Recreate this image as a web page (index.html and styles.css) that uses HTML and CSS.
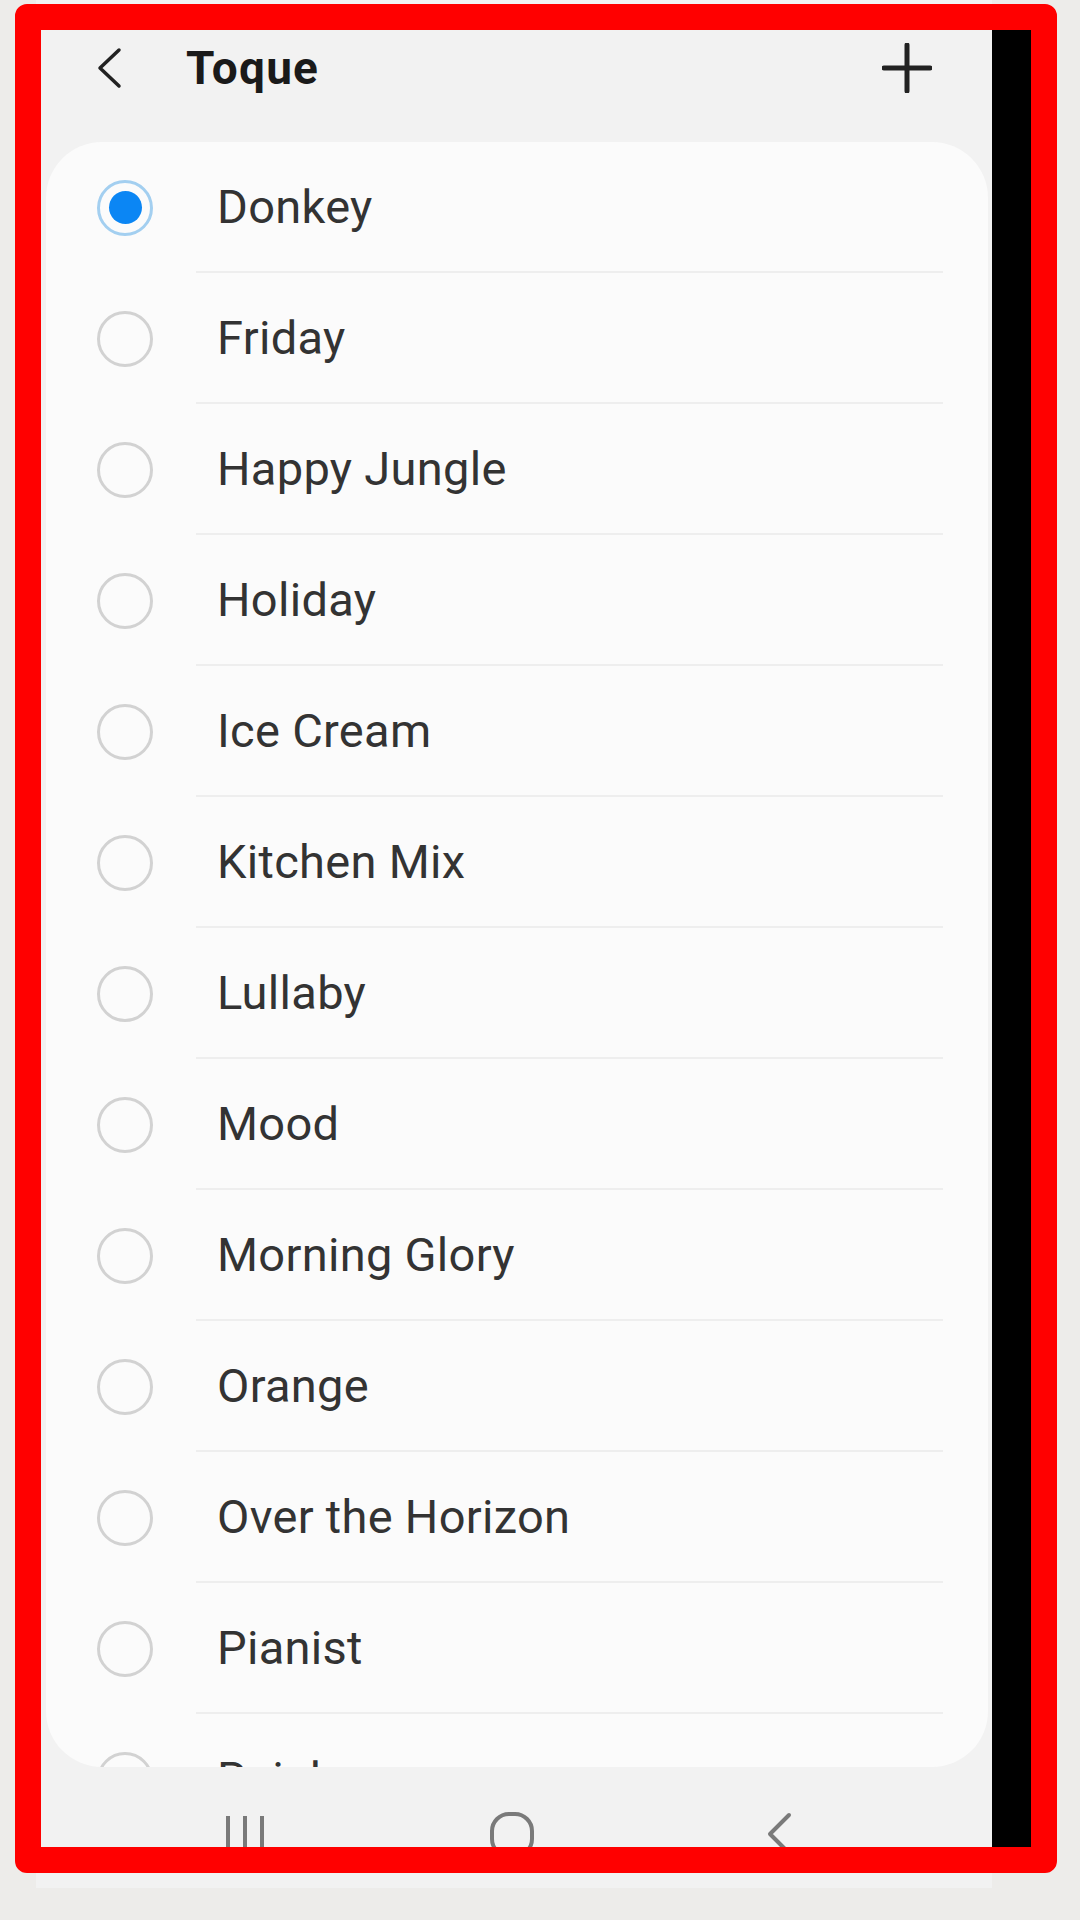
FILE: index.html
```html
<!DOCTYPE html>
<html lang="en">
<head>
<meta charset="utf-8">
<title>Toque</title>
<link rel="stylesheet" href="styles.css">
</head>
<body>
<div class="frame">
  <div class="screen">
    <header class="appbar">
      <svg class="back" width="28" height="42" viewBox="0 0 28 42"><polyline points="24,3 5,21 24,39" fill="none" stroke="#222" stroke-width="3.5" stroke-linecap="round" stroke-linejoin="round"/></svg>
      <h1 class="title">Toque</h1>
      <svg class="add" width="50" height="50" viewBox="0 0 50 50"><path d="M25 2V48M2 25H48" fill="none" stroke="#222" stroke-width="5" stroke-linecap="round"/></svg>
    </header>
    <ul class="list">
      <li class="item selected"><span class="radio"></span><span class="label">Donkey</span></li>
      <li class="item"><span class="radio"></span><span class="label">Friday</span></li>
      <li class="item"><span class="radio"></span><span class="label">Happy Jungle</span></li>
      <li class="item"><span class="radio"></span><span class="label">Holiday</span></li>
      <li class="item"><span class="radio"></span><span class="label">Ice Cream</span></li>
      <li class="item"><span class="radio"></span><span class="label">Kitchen Mix</span></li>
      <li class="item"><span class="radio"></span><span class="label">Lullaby</span></li>
      <li class="item"><span class="radio"></span><span class="label">Mood</span></li>
      <li class="item"><span class="radio"></span><span class="label">Morning Glory</span></li>
      <li class="item"><span class="radio"></span><span class="label">Orange</span></li>
      <li class="item"><span class="radio"></span><span class="label">Over the Horizon</span></li>
      <li class="item"><span class="radio"></span><span class="label">Pianist</span></li>
      <li class="item"><span class="radio"></span><span class="label">Rainbow</span></li>
    </ul>
    <nav class="navbar">
      <span class="navbtn"><svg width="40" height="44" viewBox="0 0 40 44"><path d="M3 4V44M20 4V44M37 4V44" stroke="#7a7a7a" stroke-width="4" fill="none"/></svg></span>
      <span class="navbtn"><svg width="46" height="46" viewBox="0 0 46 46"><rect x="3" y="2" width="40" height="42" rx="17" fill="none" stroke="#7a7a7a" stroke-width="4"/></svg></span>
      <span class="navbtn"><svg width="26" height="44" viewBox="0 0 26 44"><polyline points="23,3 4,22 23,41" fill="none" stroke="#7a7a7a" stroke-width="4" stroke-linecap="round" stroke-linejoin="round"/></svg></span>
    </nav>
  </div>
  <div class="strip"></div>
  <div class="annotation"></div>
</div>
</body>
</html>
```

FILE: styles.css
```css
html, body {
  margin: 0;
  padding: 0;
  background: #edecea;
  width: 1080px;
  height: 1920px;
  overflow: hidden;
  font-family: Roboto, "Noto Sans", "Liberation Sans", sans-serif;
}

.frame {
  position: relative;
  display: flex;
  align-items: flex-start;
  height: 1920px;
}

.screen {
  margin-left: 36px;
  width: 956px;
  height: 1888px;
  background: #f2f2f2;
  display: flex;
  flex-direction: column;
}

.strip {
  width: 40px;
  margin-top: 4px;
  height: 1869px;
  background: #000;
}

.annotation {
  position: absolute;
  left: 15px;
  top: 4px;
  width: 1042px;
  height: 1869px;
  box-sizing: border-box;
  border: 26px solid #ff0000;
  border-radius: 12px;
}

.appbar {
  display: flex;
  align-items: center;
  height: 76px;
  margin-top: 30px;
  padding-left: 59px;
  padding-right: 60px;
}

.back {
  flex: none;
}

.title {
  margin: 0 0 0 63px;
  font-size: 46px;
  font-weight: 700;
  letter-spacing: 1.2px;
  line-height: 1;
  color: #1a1a1a;
}

.add {
  margin-left: auto;
  flex: none;
}

.list {
  list-style: none;
  margin: 36px 4px 0 10px;
  padding: 0;
  background: #fbfbfb;
  border-radius: 56px;
  height: 1625px;
  overflow: hidden;
  flex: none;
}

.item {
  display: flex;
  align-items: stretch;
  height: 131px;
  padding-left: 51px;
}

.radio {
  flex: none;
  align-self: center;
  width: 56px;
  height: 56px;
  box-sizing: border-box;
  border: 3px solid #d2d2d2;
  border-radius: 50%;
  display: flex;
  align-items: center;
  justify-content: center;
}

.selected .radio {
  border-color: #a3cff0;
}

.selected .radio::after {
  content: "";
  width: 33px;
  height: 33px;
  border-radius: 50%;
  background: #0b86f4;
}

.label {
  flex: 1;
  display: flex;
  align-items: center;
  margin-left: 43px;
  margin-right: 45px;
  padding-left: 21px;
  border-bottom: 2px solid #eeeeee;
  font-size: 47px;
  font-weight: 400;
  letter-spacing: 0.3px;
  color: #333333;
}

.navbar {
  flex: 1;
  display: flex;
  justify-content: center;
  align-items: flex-start;
  padding-top: 45px;
  padding-right: 4px;
}

.navbtn {
  width: 267px;
  display: flex;
  justify-content: center;
}
```
